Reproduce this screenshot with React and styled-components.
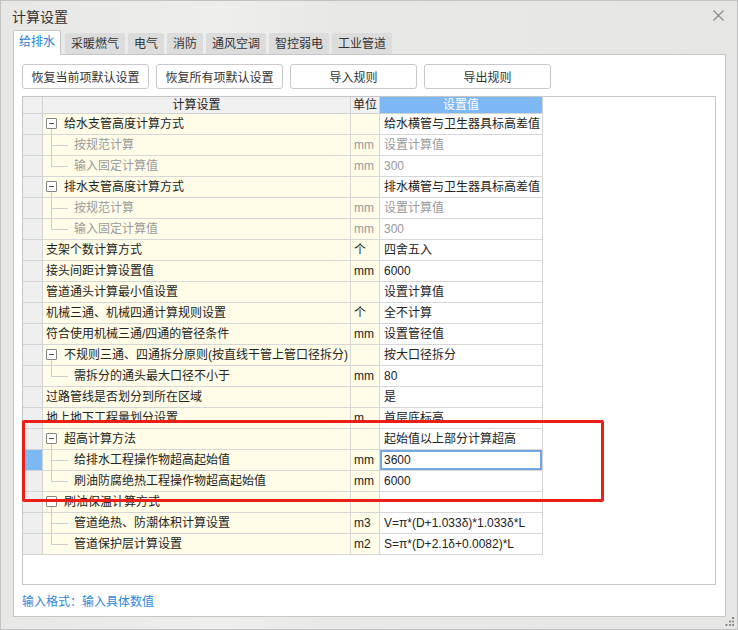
import React from 'react';
import styled, { createGlobalStyle } from 'styled-components';

const GlobalStyle = createGlobalStyle`
  html, body {
    margin: 0;
    padding: 0;
    background: #e6e6e5;
  }
  * {
    box-sizing: border-box;
  }
`;

const FONT = `"Liberation Sans", "Noto Sans CJK SC", sans-serif`;

const Window = styled.div`
  position: relative;
  width: 738px;
  height: 630px;
  border: 1px solid #c2c2c2;
  background: linear-gradient(90deg, #e7e7e5 0%, #eeeeec 30%, #e8e8e6 45%, #e6e6e5 100%);
  display: flex;
  flex-direction: column;
  font-family: ${FONT};
  color: #222;
`;

const TitleBar = styled.div`
  height: 29px;
  display: flex;
  align-items: center;
  justify-content: space-between;
  padding: 0 13px 0 11px;
  font-size: 14px;
  color: #333;
`;

const CloseButton = styled.button`
  width: 12px;
  height: 12px;
  padding: 0;
  border: none;
  background: none;
  display: flex;
  align-items: center;
  justify-content: center;
`;

const TabStrip = styled.div`
  height: 24px;
  display: flex;
  align-items: flex-end;
  gap: 3px;
  padding-left: 12px;
`;

const Tab = styled.div`
  position: relative;
  z-index: 1;
  height: ${(p) => (p.$active ? '25px' : '21px')};
  margin-bottom: ${(p) => (p.$active ? '-1px' : '0')};
  margin-right: ${(p) => (p.$active ? '1px' : '0')};
  padding: 0 ${(p) => (p.$active ? '5px' : '6px')};
  display: flex;
  align-items: center;
  font-size: 12px;
  line-height: 1;
  padding-bottom: ${(p) => (p.$active ? '2px' : '0')};
  color: ${(p) => (p.$active ? '#1f7fd6' : '#333')};
  background: ${(p) => (p.$active ? '#fff' : '#dcdcdc')};
  border: ${(p) => (p.$active ? '1px solid #c6c6c6' : 'none')};
  border-bottom: none;
  border-radius: 2px 2px 0 0;
`;

const Panel = styled.div`
  flex: 1;
  margin: 0 11px 12px 12px;
  border: 1px solid #c6c6c6;
  background: #fff;
  padding: 9px 9px 0 8px;
  display: flex;
  flex-direction: column;
`;

const ButtonRow = styled.div`
  display: flex;
  gap: 7px;
`;

const ActionButton = styled.button`
  width: 127px;
  height: 25px;
  border: 1px solid #c9c9c9;
  border-radius: 3px;
  background: #fff;
  font-family: ${FONT};
  font-size: 12px;
  color: #333;
  padding: 0;
`;

const GridFrame = styled.div`
  margin-top: 7px;
  height: 489px;
  border: 1px solid #c6c6c6;
  overflow: hidden;
`;

const Table = styled.div`
  display: grid;
  grid-template-columns: 20px 308px 29px 163px;
  width: 520px;
  font-size: 12px;
`;

const HeadCell = styled.div`
  height: 17px;
  line-height: 16px;
  border-right: 1px solid #d2d2d2;
  border-bottom: 1px solid #d2d2d2;
  text-align: center;
  background: ${(p) => (p.$accent ? '#7db8f4' : '#f0f0f0')};
  color: ${(p) => (p.$accent ? '#fff' : '#222')};
  white-space: nowrap;
`;

const RowHead = styled.div`
  height: 21px;
  border-right: 1px solid #d2d2d2;
  border-bottom: 1px solid #d2d2d2;
  background: ${(p) => (p.$selected ? '#7db8f4' : '#efefef')};
`;

const Cell = styled.div`
  position: relative;
  height: 21px;
  line-height: 20px;
  border-right: 1px solid #d6d6d6;
  border-bottom: 1px solid #d6d6d6;
  background: ${(p) => (p.$tint ? '#fffde8' : '#fff')};
  color: ${(p) => (p.$muted ? '#9a9a9a' : '#222')};
  padding-left: ${(p) => p.$indent || 3}px;
  white-space: nowrap;
  overflow: visible;
`;

const ValueCell = styled(Cell)`
  padding-left: 4px;
  box-shadow: ${(p) => (p.$focused ? 'inset 0 0 0 2px #6ea9e2' : 'none')};
`;

const ToggleBox = styled.span`
  position: absolute;
  left: 3px;
  top: 4px;
  width: 11px;
  height: 11px;
  border: 1px solid #858585;
  border-radius: 1px;
  background: #fff;
  &::after {
    content: '';
    position: absolute;
    left: 2px;
    top: 4px;
    width: 5px;
    height: 1px;
    background: #555;
  }
`;

const TreeStem = styled.span`
  position: absolute;
  left: 8px;
  width: 1px;
  background: #cdcdcd;
  top: ${(p) => p.$from}px;
  height: ${(p) => p.$len}px;
`;

const TreeBranch = styled.span`
  position: absolute;
  left: 8px;
  top: 10px;
  width: 17px;
  height: 1px;
  background: #cdcdcd;
`;

const Footer = styled.div`
  flex: 1;
  display: flex;
  align-items: center;
  font-size: 12px;
  color: #2b87e0;
`;

const Highlight = styled.div`
  position: absolute;
  left: 21px;
  top: 419px;
  width: 582px;
  height: 82px;
  border: 3px solid #ec1f17;
  border-radius: 2px;
  pointer-events: none;
`;

const Grip = styled.svg`
  position: absolute;
  right: 2px;
  bottom: 2px;
`;

const tabs = ['给排水', '采暖燃气', '电气', '消防', '通风空调', '智控弱电', '工业管道'];

const actions = ['恢复当前项默认设置', '恢复所有项默认设置', '导入规则', '导出规则'];

const rows = [
  { kind: 'parent', name: '给水支管高度计算方式', value: '给水横管与卫生器具标高差值' },
  { kind: 'child', name: '按规范计算', unit: 'mm', value: '设置计算值', muted: true },
  { kind: 'child', name: '输入固定计算值', unit: 'mm', value: '300', muted: true, last: true },
  { kind: 'parent', name: '排水支管高度计算方式', value: '排水横管与卫生器具标高差值' },
  { kind: 'child', name: '按规范计算', unit: 'mm', value: '设置计算值', muted: true },
  { kind: 'child', name: '输入固定计算值', unit: 'mm', value: '300', muted: true, last: true },
  { name: '支架个数计算方式', unit: '个', value: '四舍五入' },
  { name: '接头间距计算设置值', unit: 'mm', value: '6000' },
  { name: '管道通头计算最小值设置', value: '设置计算值' },
  { name: '机械三通、机械四通计算规则设置', unit: '个', value: '全不计算' },
  { name: '符合使用机械三通/四通的管径条件', unit: 'mm', value: '设置管径值' },
  { kind: 'parent', name: '不规则三通、四通拆分原则(按直线干管上管口径拆分)', value: '按大口径拆分' },
  { kind: 'child', name: '需拆分的通头最大口径不小于', unit: 'mm', value: '80', last: true },
  { name: '过路管线是否划分到所在区域', value: '是' },
  { name: '地上地下工程量划分设置', unit: 'm', value: '首层底标高' },
  { kind: 'parent', name: '超高计算方法', value: '起始值以上部分计算超高' },
  { kind: 'child', name: '给排水工程操作物超高起始值', unit: 'mm', value: '3600', selected: true },
  { kind: 'child', name: '刷油防腐绝热工程操作物超高起始值', unit: 'mm', value: '6000', last: true },
  { kind: 'parent', name: '刷油保温计算方式', value: '' },
  { kind: 'child', name: '管道绝热、防潮体积计算设置', unit: 'm3', value: 'V=π*(D+1.033δ)*1.033δ*L' },
  { kind: 'child', name: '管道保护层计算设置', unit: 'm2', value: 'S=π*(D+2.1δ+0.0082)*L', last: true },
];

function NameCell({ row }) {
  if (row.kind === 'parent') {
    return (
      <Cell $tint $indent={21}>
        <ToggleBox />
        <TreeStem $from={15} $len={6} />
        {row.name}
      </Cell>
    );
  }
  if (row.kind === 'child') {
    return (
      <Cell $tint $muted={row.muted} $indent={31}>
        <TreeStem $from={-1} $len={row.last ? 12 : 22} />
        <TreeBranch />
        {row.name}
      </Cell>
    );
  }
  return <Cell $tint>{row.name}</Cell>;
}

function SettingsTable() {
  return (
    <Table>
      <HeadCell />
      <HeadCell>计算设置</HeadCell>
      <HeadCell>单位</HeadCell>
      <HeadCell $accent>设置值</HeadCell>
      {rows.map((row, i) => (
        <React.Fragment key={i}>
          <RowHead $selected={row.selected} />
          <NameCell row={row} />
          <Cell $tint $muted={row.muted}>{row.unit || ''}</Cell>
          <ValueCell $muted={row.muted} $focused={row.selected}>
            {row.value}
          </ValueCell>
        </React.Fragment>
      ))}
    </Table>
  );
}

export default function App() {
  return (
    <>
      <GlobalStyle />
      <Window>
        <TitleBar>
          <span>计算设置</span>
          <CloseButton aria-label="关闭">
            <svg width="11" height="11" viewBox="0 0 11 11">
              <path d="M0.5 0.5 L10.5 10.5 M10.5 0.5 L0.5 10.5" stroke="#8a8a8a" strokeWidth="1.2" />
            </svg>
          </CloseButton>
        </TitleBar>
        <TabStrip>
          {tabs.map((t, i) => (
            <Tab key={t} $active={i === 0}>
              {t}
            </Tab>
          ))}
        </TabStrip>
        <Panel>
          <ButtonRow>
            {actions.map((a) => (
              <ActionButton key={a}>{a}</ActionButton>
            ))}
          </ButtonRow>
          <GridFrame>
            <SettingsTable />
          </GridFrame>
          <Footer>输入格式：输入具体数值</Footer>
        </Panel>
        <Highlight />
        <Grip width="10" height="10" viewBox="0 0 10 10">
          <g fill="#8c8c8c">
            <rect x="7" y="0" width="2" height="2" />
            <rect x="4" y="3.5" width="2" height="2" />
            <rect x="7" y="3.5" width="2" height="2" />
            <rect x="0.5" y="7" width="2" height="2" />
            <rect x="4" y="7" width="2" height="2" />
            <rect x="7" y="7" width="2" height="2" />
          </g>
        </Grip>
      </Window>
    </>
  );
}
